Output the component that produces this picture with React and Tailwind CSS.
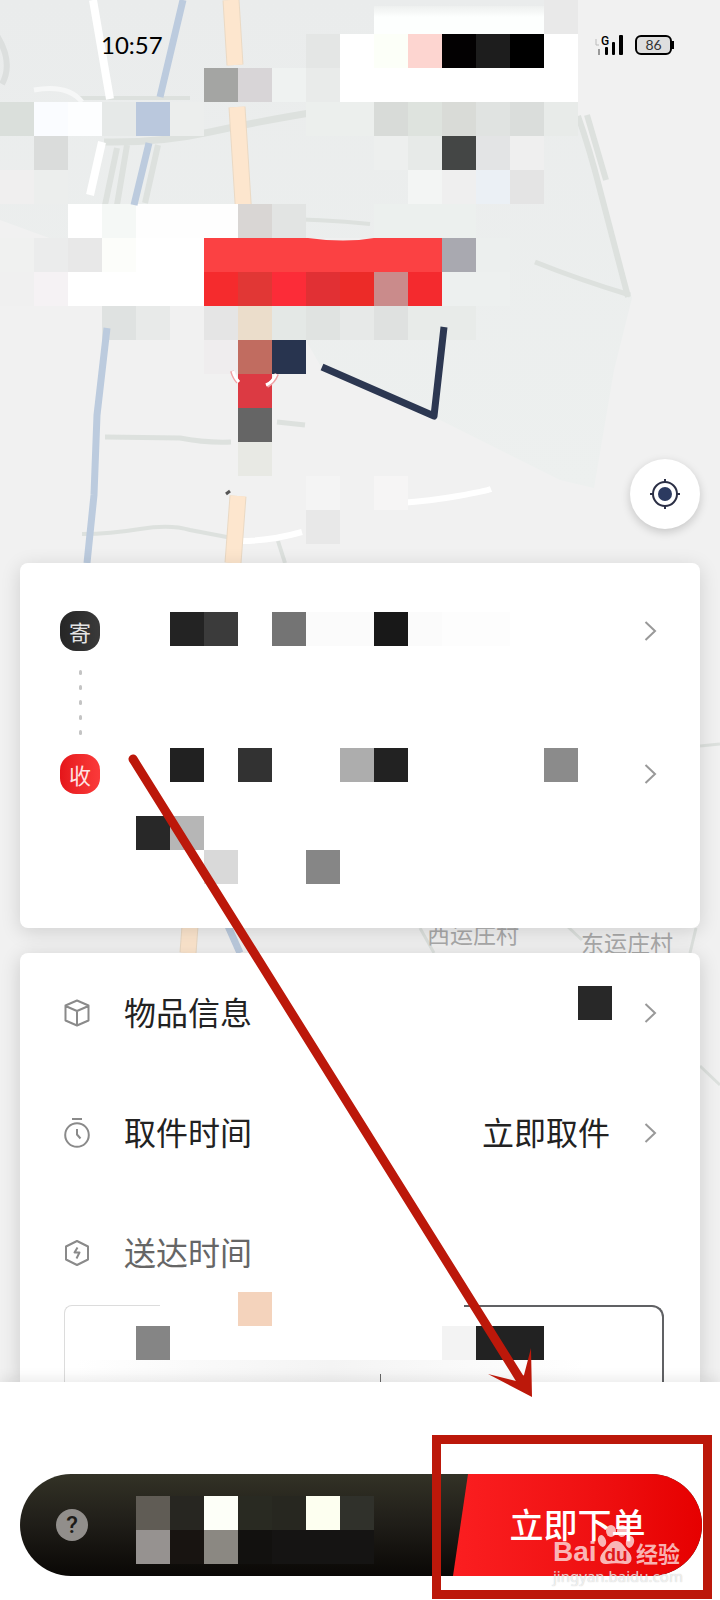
const CELL = 34

// [column, row, colour, columns wide]
const mapTiles = [
  [16, 0, '#e9e9e9'],
  [9, 1, '#e4e6e5'], [10, 1, '#ffffff'], [11, 1, '#fcfff8'], [12, 1, '#fdd5d0'], [13, 1, '#030102'], [14, 1, '#1d1d1d'], [15, 1, '#000000'], [16, 1, '#ffffff'],
  [6, 2, '#a4a5a3'], [7, 2, '#d8d5d7'], [8, 2, '#eff2f1'], [9, 2, '#e9ebea'], [10, 2, '#ffffff', 7],
  [0, 3, '#dadfdb'], [1, 3, '#fafcff'], [2, 3, '#fdfeff'], [3, 3, '#e6e9e8'], [4, 3, '#bac8dd'], [5, 3, '#eceeed'], [9, 3, '#ecefed', 2],
  [11, 3, '#d8dbd8'], [12, 3, '#dee3de'], [13, 3, '#d9dbd7'], [14, 3, '#e0e3e1'], [15, 3, '#dadddb'], [16, 3, '#e8ebe9'],
  [1, 4, '#dadcdb'], [11, 4, '#edefee'], [12, 4, '#e7eae8'], [13, 4, '#444645'], [14, 4, '#e3e4e5'], [15, 4, '#efefef'],
  [0, 5, '#f0efef'], [1, 5, '#eceeed'], [12, 5, '#f3f5f4'], [13, 5, '#efefef'], [14, 5, '#ebf0f5'], [15, 5, '#e4e4e4'],
  [2, 6, '#ffffff'], [3, 6, '#f5f8f6'], [4, 6, '#fefefe', 3], [7, 6, '#d9d6d4'], [8, 6, '#e2e4e3'], [11, 6, '#ecf0ee', 3],
  [0, 7, '#f0f1f0'], [1, 7, '#ebecec'], [2, 7, '#e8e8e8'], [3, 7, '#fcfdfa'], [4, 7, '#ffffff', 2], [6, 7, '#fb4143', 7], [13, 7, '#a9a9b0'], [14, 7, '#ecefee'],
  [0, 8, '#f0f0f0'], [1, 8, '#f5f2f4'], [2, 8, '#ffffff', 4], [6, 8, '#f52b2d'], [7, 8, '#e13735'], [8, 8, '#fc2c38'], [9, 8, '#e13034'],
  [10, 8, '#ec2b28'], [11, 8, '#ca8b8b'], [12, 8, '#f42a2e'], [13, 8, '#edf0ef', 2],
  [3, 9, '#dfe2e1'], [4, 9, '#e8eae9'], [6, 9, '#e5e5e5'], [7, 9, '#ebddcb'], [8, 9, '#e4e8e6'], [9, 9, '#e0e3e1'], [10, 9, '#e7e9e8'], [11, 9, '#dfe1e0'], [12, 9, '#e8ebe9', 2],
  [6, 10, '#efedee'], [7, 10, '#c16c60'], [8, 10, '#28344f'],
  [7, 11, '#dc3a43'],
  [7, 12, '#656565'],
  [7, 13, '#e8e9e4'],
  [9, 14, '#f4f4f4'], [11, 14, '#f6f5f5'],
  [9, 15, '#e8e8e8'],
]

// a row of mosaic cells, null leaves a cell empty
function Tiles({ cells }) {
  return (
    <div className="flex h-[34px]">
      {cells.map((color, i) => (
        <span key={i} className="w-[34px] shrink-0" style={color ? { backgroundColor: color } : undefined} />
      ))}
    </div>
  )
}

function Chevron() {
  return (
    <svg viewBox="0 0 20 24" className="h-6 w-5" fill="none" stroke="#999" strokeWidth="2">
      <path d="M5.500 3l9.500 9-9.500 9" />
    </svg>
  )
}

function MapView() {
  return (
    <svg
      viewBox="0 0 720 1600"
      preserveAspectRatio="xMidYMin slice"
      className="absolute inset-0 h-full w-full"
      fill="none"
      aria-hidden="true"
    >
      <defs>
        <linearGradient id="whiteTop" x1="0" y1="0" x2="0" y2="1">
          <stop offset="0" stopColor="#eef0ef" />
          <stop offset="0.4" stopColor="#fdfffe" />
        </linearGradient>
        <linearGradient id="park" x1="0" y1="0" x2="0" y2="1">
          <stop offset="0" stopColor="#eaecec" />
          <stop offset="1" stopColor="#edf0ef" />
        </linearGradient>
      </defs>
      <rect width="720" height="1600" fill="#f1f1f1" />
      <path d="M0 0H575V110L632 298 614 370 594 488 560 480 500 450 434 417 320 365 300 330 0 220Z" fill="url(#park)" />

      <g stroke="#dde1de" strokeWidth="6">
        <path d="M-4 34Q14 62 2 84" stroke="#dcdfde" />
        <path d="M80 98H190" strokeWidth="4" />
        <path d="M104 142Q160 143 210 132T322 111" strokeWidth="7" />
        <path d="M117 148L105 205M127 145L117 205M158 145L145 203" />
        <path d="M272 219Q320 219 370 224" strokeWidth="4" />
        <path d="M578 116Q590 150 600 190L628 297M587 115L606 180" />
        <path d="M535 262Q580 280 630 295" strokeWidth="5" />
        <path d="M105 437L180 438Q205 443 231 442M277 422L305 425" strokeWidth="5" />
        <path d="M82 534Q110 534 140 529T190 530L232 538" strokeWidth="4" />
        <path d="M278 541L285 563" strokeWidth="4" />
        <path d="M700 746L720 744M700 1066L720 1085M567 926L582 940M420 928L434 953M696 928L690 953" strokeWidth="3" />
      </g>
      <g stroke="#fff" strokeWidth="8">
        <path d="M93 0L110 99M102 142L90 195" />
        <path d="M34 90Q68 84 82 102" strokeWidth="5" stroke="#f6f7f7" />
        <path d="M241 541Q270 541 302 532M400 503Q430 501 458 496T491 489" strokeWidth="6" />
      </g>
      <g stroke="#ead9c4" strokeWidth="17">
        <path d="M231 0L235 65M237 107L244 218M238 496L233 563M190 926L188 953" />
      </g>
      <g stroke="#fde6ce" strokeWidth="15">
        <path d="M231 0L235 65M237 107L244 218M238 496L233 563M190 926L188 953" />
      </g>
      <path d="M226 494L230 491" stroke="#555" strokeWidth="3" />

      <rect x="374" y="6" width="170" height="28" fill="url(#whiteTop)" />
      {mapTiles.map(([col, row, color, span = 1]) => (
        <rect key={`${col}-${row}`} x={col * CELL} y={row * CELL} width={span * CELL} height={CELL} fill={color} />
      ))}
      <path d="M232 371Q234 378 238 382M277 374Q274 382 267 386" stroke="#f0a0a4" strokeWidth="4" />
      <path d="M233 371Q235 378 239 382M276 374Q273 382 266 385" stroke="#fff" strokeWidth="3" />
      <path d="M308 238Q345 243 374 238Z" fill="#f0f0f0" />
      <path d="M183 0L160 97M149 143L134 205M107 328L97 415 94 495 87 563M228 926L240 953" stroke="#bccbde" strokeWidth="7" />
      <path d="M322 367L434 416 444 327" stroke="#2c3751" strokeWidth="7" strokeLinejoin="round" />

      <g fill="#a9a9a9" fontSize="23" fontFamily="'Noto Sans CJK SC', sans-serif">
        <text x="427" y="943">西运庄村</text>
        <text x="581" y="952">东运庄村</text>
      </g>
    </svg>
  )
}

function StatusBar() {
  return (
    <header className="relative flex h-[90px] items-center justify-between pr-[46px] pl-[101px]">
      <time className="font-[Lato,sans-serif] text-2xl text-black">10:57</time>
      <div className="flex items-center gap-3">
        <svg viewBox="0 0 28 22" className="h-[22px] w-7" aria-label="4G">
          <text x="6" y="11" fontSize="12" fontFamily="Roboto, sans-serif" fontWeight="500">G</text>
          <path d="M1 5v6h3" stroke="#bbb" fill="none" />
          <rect x="3" y="15" width="2" height="6" fill="#999" />
          <rect x="10" y="13" width="3" height="8" rx="1" />
          <rect x="17" y="8" width="3" height="13" rx="1" />
          <rect x="24" y="1" width="4" height="20" rx="1" />
        </svg>
        <div className="flex items-center">
          <span className="flex h-5 w-[37px] items-center justify-center rounded-md border-2 border-black bg-[#dedede] font-[Lato,sans-serif] text-sm text-[#333]">
            86
          </span>
          <span className="h-2 w-[2px] bg-black" />
        </div>
      </div>
    </header>
  )
}

function RouteCard() {
  return (
    <section className="relative mx-5 flex rounded-lg bg-white px-10 pt-12 pb-11 shadow-[0_4px_20px_rgba(0,0,0,0.14)]">
      <div className="flex shrink-0 flex-col items-center">
        <span className="flex h-10 w-10 items-center justify-center rounded-2xl bg-linear-to-r from-[#262626] to-[#3a3a3a] text-[22px] leading-none text-[#e5e5e5]">
          寄
        </span>
        <div className="flex h-[103px] flex-col items-center justify-center gap-[10px]">
          {[0, 1, 2, 3, 4].map(i => (
            <span key={i} className="h-[5px] w-[3px] rounded-sm bg-[#c4c4c4]" />
          ))}
        </div>
        <span className="flex h-10 w-10 items-center justify-center rounded-2xl bg-linear-to-r from-[#e5151a] to-[#fb3a3a] text-[22px] leading-none text-[#ffe3e3]">
          收
        </span>
      </div>
      <div className="min-w-0 flex-1 pt-px pl-9">
        <Tiles cells={[null, '#232323', '#3b3b3b', null, '#747474', '#fbfbfb', '#fbfbfb', '#181818', '#fbfbfb', '#fdfdfd', '#fdfdfd']} />
        <div className="h-[102px]" />
        <Tiles
          cells={[null, '#212121', null, '#323232', null, null, '#adadad', '#222222', null, null, null, null, '#8b8b8b']}
        />
        <div className="h-[34px]" />
        <Tiles cells={['#282828', '#b6b6b6']} />
        <Tiles cells={[null, null, '#d9d9d9', null, null, '#868686']} />
      </div>
      <div className="flex shrink-0 flex-col gap-[103px]">
        <button type="button" aria-label="寄件地址" className="flex h-10 items-center"><Chevron /></button>
        <button type="button" aria-label="收件地址" className="flex h-10 items-center"><Chevron /></button>
      </div>
    </section>
  )
}

function BoxIcon() {
  return (
    <svg viewBox="0 0 26 28" className="h-7 w-[26px] shrink-0" fill="none" stroke="#8a8a8a" strokeWidth="2" strokeLinejoin="round">
      <path d="M13 1.500L24.500 6.500V21.500L13 26.500 1.500 21.500V6.500ZM1.500 7L13 12 24.500 7M13 12V26" />
    </svg>
  )
}

function TimerIcon() {
  return (
    <svg viewBox="0 0 26 32" className="h-8 w-[26px] shrink-0" fill="none" stroke="#8a8a8a" strokeWidth="2">
      <circle cx="13" cy="18" r="11.800" />
      <path d="M8 2H18M13 12V17.500L16.500 21.500" />
    </svg>
  )
}

function BoltIcon() {
  return (
    <svg viewBox="0 0 26 28" className="h-7 w-[26px] shrink-0" fill="none" stroke="#8a8a8a" strokeWidth="2" strokeLinejoin="round">
      <path d="M13 2L24 7.500V20.500L13 26 2 20.500V7.500Z" />
      <path d="M13.500 8.500L10.500 13.500H15.500L12.500 19.500" />
    </svg>
  )
}

function Row({ icon, label, muted, children }) {
  return (
    <div className="flex h-10 items-center">
      {icon}
      <span className={muted ? 'pb-1 pl-[34px] text-[32px] leading-9 text-[#666]' : 'pb-1 pl-[34px] text-[32px] leading-9 text-[#222]'}>
        {label}
      </span>
      {children}
    </div>
  )
}

function DetailCard() {
  return (
    <section className="relative mx-5 mt-[25px] rounded-t-lg bg-white pt-10 pr-10 pl-11 shadow-[0_4px_20px_rgba(0,0,0,0.16)]">
      <div className="flex flex-col gap-20">
        <Row icon={<BoxIcon />} label="物品信息">
          <span className="mr-7 mb-5 ml-auto h-[34px] w-[34px] bg-[#282828]" />
          <button type="button" aria-label="物品信息"><Chevron /></button>
        </Row>
        <Row icon={<TimerIcon />} label="取件时间">
          <button type="button" className="ml-auto flex items-center gap-[30px] text-[32px] leading-9 text-[#222]">
            <span className="pb-1">立即取件</span>
            <Chevron />
          </button>
        </Row>
        <Row icon={<BoltIcon />} label="送达时间" muted />
      </div>
      <div className="relative mt-[19px] -mr-1">
        <div className="absolute inset-x-0 top-[13px] bottom-0 flex justify-between">
          <span className="w-24 rounded-tl-lg border-t border-l border-[#dcdcdc]" />
          <span className="w-[200px] rounded-tr-xl border-t-2 border-r-2 border-[#606164]" />
        </div>
        <div className="relative pl-[72px]">
          <Tiles cells={[null, null, null, '#f4d3bc']} />
          <Tiles cells={['#858585', null, null, null, null, null, null, null, null, '#f3f3f3', '#222222', '#222222']} />
        </div>
        <div className="relative mr-20 ml-3 flex h-[22px] items-end justify-center bg-linear-to-r from-white via-[#f4f4f4] to-white">
          <span className="ml-[100px] h-2 w-px bg-[#666]" />
        </div>
      </div>
    </section>
  )
}

function Watermark() {
  return (
    <div className="pointer-events-none absolute right-10 bottom-[14px] w-[127px] whitespace-nowrap text-white/70">
      <div className="flex items-end justify-between font-bold">
        <span className="font-['Liberation_Sans',sans-serif] text-[28px] leading-7">Bai</span>
        <svg viewBox="0 0 38 42" className="h-[42px] w-[38px] shrink-0" fill="currentColor">
          <ellipse cx="5" cy="17" rx="4" ry="6" transform="rotate(-15 5 17)" />
          <ellipse cx="14" cy="7" rx="5" ry="6" />
          <ellipse cx="25" cy="7" rx="5" ry="6" transform="rotate(10 25 7)" />
          <ellipse cx="33" cy="18" rx="4" ry="6" transform="rotate(15 33 18)" />
          <path d="M19 17C25 17 27 23 31 27 37 33 35 41 28 40 22 39 16 39 10 40 2 41 1 33 7 27 11 23 13 17 19 17Z" />
          <text x="19" y="37" textAnchor="middle" fontSize="19" fontWeight="700" fill="#e01a1c" fontFamily="'Liberation Sans', sans-serif">du</text>
        </svg>
        <span className="text-[22px] leading-7">经验</span>
      </div>
      <p className="font-['Noto_Sans',sans-serif] text-[15px] leading-5 [text-shadow:0_0_1px_rgba(150,150,150,0.6)]">
        jingyan.baidu.com
      </p>
    </div>
  )
}

function OrderBar() {
  return (
    <footer className="relative bg-white pt-[92px] pr-[18px] pb-6 pl-5 shadow-[0_-4px_12px_rgba(0,0,0,0.08)]">
      <div className="flex h-[102px] overflow-hidden rounded-full bg-linear-to-b from-[#333226] via-[#1f1d18] to-[#0a0806]">
        <button
          type="button"
          aria-label="帮助"
          className="ml-9 h-8 w-8 shrink-0 self-center rounded-full bg-[#918e8b] font-[Roboto,sans-serif] text-2xl leading-8 font-medium text-[#1d1b18]"
        >
          ?
        </button>
        <div className="min-w-0 flex-1 overflow-hidden pt-[22px] pl-12">
          <Tiles cells={['#605c55', '#272621', '#fdfff8', '#292a22', '#272720', '#fdfff0', '#30312b']} />
          <Tiles cells={['#969290', '#181411', '#8b8882', '#12110f', '#151413', '#151413', '#151413']} />
        </div>
        <button
          type="button"
          className="w-[249px] shrink-0 bg-linear-to-r from-[#fb1e20] to-[#e60000] pb-0.5 text-[34px] leading-9 font-medium text-white [clip-path:polygon(15px_0,100%_0,100%_100%,0_100%)]"
        >
          立即下单
        </button>
      </div>
      <Watermark />
      <div className="pointer-events-none absolute right-2 bottom-px h-[164px] w-[280px] border-[9px] border-[#bc180a]" />
    </footer>
  )
}

function GuideArrow() {
  return (
    <svg
      viewBox="0 0 720 1600"
      preserveAspectRatio="xMidYMin slice"
      className="pointer-events-none absolute inset-0 h-full w-full"
      aria-hidden="true"
    >
      <path d="M133 759L520 1379" stroke="#bc180a" strokeWidth="9" strokeLinecap="round" />
      <path d="M532 1397L488 1374 516 1381 524 1375 531 1348Z" fill="#bc180a" />
    </svg>
  )
}

export default function App() {
  return (
    <div className="relative flex min-h-screen flex-col overflow-hidden bg-[#f1f1f1] font-['Noto_Sans_CJK_SC',sans-serif]">
      <MapView />
      <StatusBar />
      <div className="relative flex h-[473px] items-end justify-end pr-5 pb-[34px]">
        <button
          type="button"
          aria-label="定位"
          className="flex h-[70px] w-[70px] items-center justify-center rounded-full bg-white shadow-[0_3px_10px_rgba(0,0,0,0.18)]"
        >
          <svg viewBox="0 0 30 30" className="h-[30px] w-[30px]" fill="none" stroke="#2b2f45" strokeWidth="2">
            <circle cx="15" cy="15" r="12" />
            <circle cx="15" cy="15" r="7" fill="#2c3a60" stroke="none" />
            <path d="M15 0V4M15 26V30M0 15H4M26 15H30" />
          </svg>
        </button>
      </div>
      <main>
        <RouteCard />
        <DetailCard />
      </main>
      <OrderBar />
      <GuideArrow />
    </div>
  )
}
